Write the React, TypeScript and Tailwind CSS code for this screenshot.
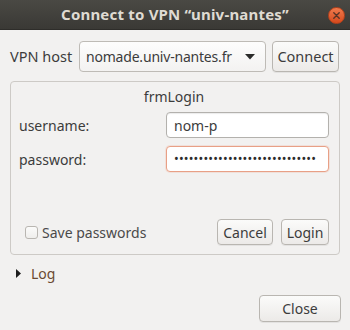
import React from 'react';

const font = { fontFamily: '"Noto Sans", "Open Sans", sans-serif' };

const btn =
  'flex items-center justify-center rounded-[4px] border border-[#b9b6b1] bg-gradient-to-b from-[#fbfbfa] to-[#eceae8] text-[#3c3c3c] shadow-[0_1px_0_rgba(0,0,0,0.06)]';

const App = () => {
  return (
    <div className="w-[350px] h-[330px] bg-[#f2f1f0] flex flex-col overflow-hidden text-[14px] text-[#3c3c3c]" style={font}>
      {/* title bar */}
      <div className="relative h-[30px] shrink-0 flex items-center justify-center bg-gradient-to-b from-[#4a4944] to-[#3a3935] border-b border-[#2e2d2a]">
        <span className="font-bold text-[15px] text-[#dfdbd2] tracking-[0.2px]">Connect to VPN “univ-nantes”</span>
        <div className="absolute right-[5px] top-[7px] w-[17px] h-[17px] rounded-full bg-gradient-to-b from-[#f07a4c] to-[#d6491b] flex items-center justify-center border border-[#b8421b]">
          <svg width="7" height="7" viewBox="0 0 7 7">
            <path d="M0.8 0.8 L6.2 6.2 M6.2 0.8 L0.8 6.2" stroke="#5a3426" strokeWidth="1.4" strokeLinecap="round" />
          </svg>
        </div>
      </div>

      <div className="flex flex-col px-[10px]">
        {/* host row */}
        <div className="flex items-center mt-[11px] h-[31px]">
          <span className="w-[69px] text-[14.5px]">VPN host</span>
          <div className="w-[187px] h-[31px] rounded-[4px] border border-[#bebbb6] bg-gradient-to-b from-[#fdfdfd] to-[#f3f2f1] flex items-center pl-[6px] pr-[10px] justify-between">
            <span className="tracking-[-0.2px]">nomade.univ-nantes.fr</span>
            <svg width="10" height="6" viewBox="0 0 10 6">
              <path d="M0 0 L10 0 L5 5.5 Z" fill="#2b2b2b" />
            </svg>
          </div>
          <div className={`${btn} ml-[6px] w-[67px] h-[31px] text-[14.5px]`}>Connect</div>
        </div>

        {/* login group */}
        <div className="mt-[9px] h-[174px] rounded-[4px] border border-[#cdcac6] flex flex-col pl-[8px] pr-[10px]">
          <div className="text-center mt-[5px] h-[20px] leading-[20px]">frmLogin</div>
          <div className="flex items-center justify-between mt-[5px] h-[26px]">
            <span>username:</span>
            <div className="w-[163px] h-[26px] rounded-[4px] border border-[#b3b1ad] bg-white shadow-[inset_0_1px_1px_rgba(0,0,0,0.08)] flex items-center pl-[7px]">
              nom-p
            </div>
          </div>
          <div className="flex items-center justify-between mt-[8px] h-[26px]">
            <span>password:</span>
            <div className="w-[163px] h-[26px] rounded-[4px] border border-[#e8a086] bg-white shadow-[0_0_0_1px_rgba(240,160,130,0.2)] flex items-center pl-[7px] overflow-hidden">
              <span className="text-[12.5px] tracking-[0.2px] text-[#2b2b2b]">{'•'.repeat(29)}</span>
            </div>
          </div>
          <div className="flex items-center justify-between mt-[47px] h-[26px]">
            <div className="flex items-center pl-[6px]">
              <div className="w-[13px] h-[13px] rounded-[3px] border border-[#b9b6b1] bg-gradient-to-b from-[#fbfbfa] to-[#efeeec]" />
              <span className="ml-[4px] text-[#4a4a4a]">Save passwords</span>
            </div>
            <div className="flex">
              <div className={`${btn} w-[56px] h-[26px]`}>Cancel</div>
              <div className={`${btn} ml-[8px] w-[48px] h-[26px]`}>Login</div>
            </div>
          </div>
        </div>

        {/* log expander */}
        <div className="flex items-center mt-[9px] h-[18px] pl-[6px]">
          <svg width="5" height="9" viewBox="0 0 5 9">
            <path d="M0 0 L5 4.5 L0 9 Z" fill="#1e1e1e" />
          </svg>
          <span className="ml-[10px] text-[#6b4a32]">Log</span>
        </div>

        {/* close */}
        <div className="flex justify-end mt-[13px] -mr-[1px]">
          <div className={`${btn} w-[82px] h-[27px]`}>Close</div>
        </div>
      </div>
    </div>
  );
};

export default App;
